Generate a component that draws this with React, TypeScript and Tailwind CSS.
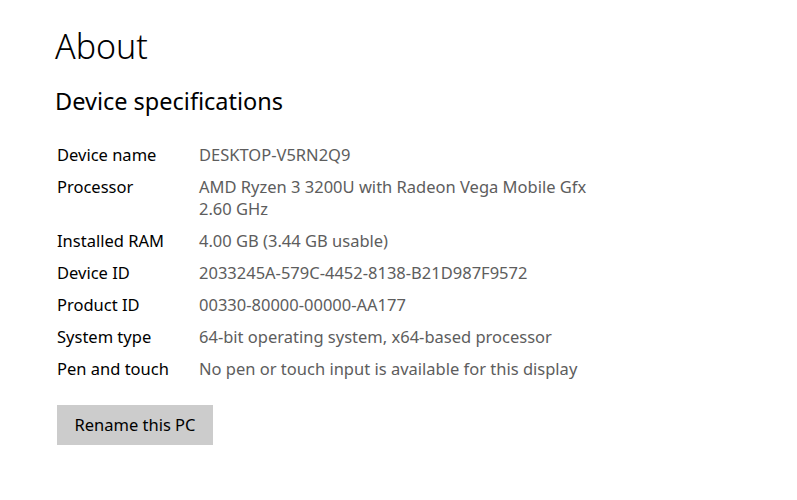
const specs: { label: string; value: string[] }[] = [
  { label: "Device name", value: ["DESKTOP-V5RN2Q9"] },
  { label: "Processor", value: ["AMD Ryzen 3 3200U with Radeon Vega Mobile Gfx", "2.60 GHz"] },
  { label: "Installed RAM", value: ["4.00 GB (3.44 GB usable)"] },
  { label: "Device ID", value: ["2033245A-579C-4452-8138-B21D987F9572"] },
  { label: "Product ID", value: ["00330-80000-00000-AA177"] },
  { label: "System type", value: ["64-bit operating system, x64-based processor"] },
  { label: "Pen and touch", value: ["No pen or touch input is available for this display"] },
];

export default function App() {
  return (
    <div className="w-[797px] h-[500px] bg-white font-['Noto_Sans',sans-serif] text-black overflow-hidden">
      <div className="pl-[55px] pt-[24px]">
        <h1 className="text-[34px] leading-[44px] font-light">About</h1>
        <h2 className="mt-[18px] text-[23.5px] leading-[30px]">Device specifications</h2>

        <div className="mt-[28px] ml-[2px] flex flex-col gap-[10px] text-[16.5px] leading-[22px]">
          {specs.map((s) => (
            <div key={s.label} className="flex">
              <div className="w-[142px] shrink-0">{s.label}</div>
              <div className="text-[#5d5d5d]">
                {s.value.map((v) => (
                  <div key={v}>{v}</div>
                ))}
              </div>
            </div>
          ))}
        </div>

        <button className="mt-[25px] ml-[2px] w-[156px] h-[40px] bg-[#cccccc] text-[16.5px] text-black">
          Rename this PC
        </button>
      </div>
    </div>
  );
}
